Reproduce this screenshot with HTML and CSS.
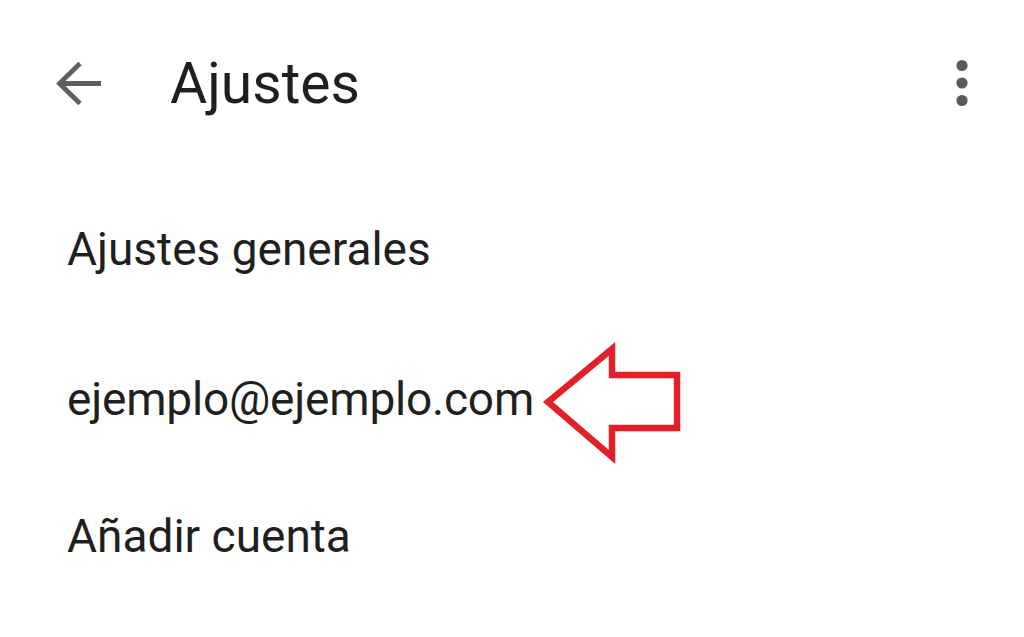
FILE: index.html
```html
<!DOCTYPE html>
<html lang="es">
<head>
<meta charset="utf-8">
<title>Ajustes</title>
<link rel="stylesheet" href="styles.css">
</head>
<body>
<div class="screen">
  <header class="topbar">
    <span class="back">
      <svg width="48" height="48" viewBox="0 0 48 48"><path d="M47 23.5H6M26 3.5L5.5 23.5L26 43.5" fill="none" stroke="#5f5f5f" stroke-width="4.8"/></svg>
    </span>
    <h1 class="title">Ajustes</h1>
    <span class="more">
      <svg width="14" height="48" viewBox="0 0 14 48"><circle cx="7" cy="6.5" r="5.6" fill="#5a5a5a"/><circle cx="7" cy="24" r="5.6" fill="#5a5a5a"/><circle cx="7" cy="41.5" r="5.6" fill="#5a5a5a"/></svg>
    </span>
  </header>
  <ul class="list">
    <li class="item general">Ajustes generales</li>
    <li class="item account">ejemplo@ejemplo.com
      <svg class="pointer" width="150" height="130" viewBox="0 0 150 130"><polygon points="8,62 72,9 72,35 137,35 137,88 72,88 72,117" fill="none" stroke="#e2202a" stroke-width="6.5"/></svg>
    </li>
    <li class="item">Añadir cuenta</li>
  </ul>
</div>
</body>
</html>
```
FILE: styles.css
```css
html, body {
  margin: 0;
  padding: 0;
  background: #ffffff;
}
body {
  font-family: Roboto, "Liberation Sans", sans-serif;
  color: #1f1f1f;
}
.screen {
  width: 1024px;
  height: 637px;
  overflow: hidden;
}
.topbar {
  display: flex;
  align-items: flex-start;
  box-sizing: border-box;
  height: 225px;
  padding: 60px 55px 0 54px;
}
.back {
  display: flex;
  width: 48px;
  height: 48px;
}
.title {
  margin: 0 0 0 68px;
  font-weight: 400;
  font-size: 57px;
  line-height: 48px;
  flex: 1;
}
.more {
  display: flex;
  margin-top: -1px;
}
.list {
  list-style: none;
  margin: 0;
  padding: 0 0 0 67px;
}
.item {
  font-size: 46px;
  line-height: 48px;
  height: 137px;
  position: relative;
}
.general {
  height: 150px;
}
.account {
  letter-spacing: -0.2px;
}
.pointer {
  position: absolute;
  left: 473px;
  top: -35px;
}
```
